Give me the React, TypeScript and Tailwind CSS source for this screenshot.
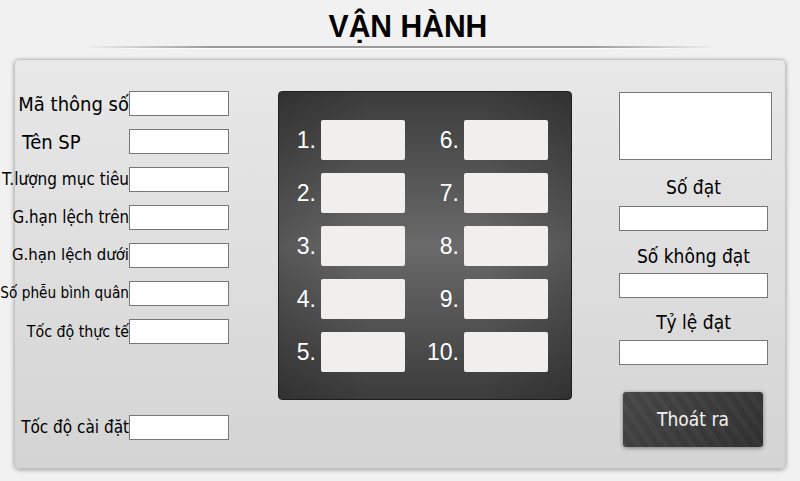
const leftRows = [
  { label: 'Mã thông số', size: 'text-[20px]', align: 'justify-end' },
  { label: 'Tên SP', size: 'text-[20px]', align: 'justify-between pl-[7px]' },
  { label: 'T.lượng mục tiêu', size: 'text-[17px]', align: 'justify-end' },
  { label: 'G.hạn lệch trên', size: 'text-[16.8px]', align: 'justify-end' },
  { label: 'G.hạn lệch dưới', size: 'text-[16.6px]', align: 'justify-end' },
  { label: 'Số phễu bình quân', size: 'text-[15.2px]', align: 'justify-end' },
  { label: 'Tốc độ thực tế', size: 'text-[15.8px]', align: 'justify-end' },
]

function Field({ className = '' }: { className?: string }) {
  return <div className={`shrink-0 border border-[#777] bg-white ${className}`} />
}

function LeftRow({ label, size, align, className = '' }: { label: string; size: string; align: string; className?: string }) {
  return (
    <div className={`flex h-[25px] items-center ${align} ${className}`}>
      <span className={`whitespace-nowrap leading-none text-black ${size}`}>{label}</span>
      <Field className="h-[25px] w-[100px]" />
    </div>
  )
}

export default function App() {
  const slots = Array.from({ length: 10 }, (_, i) => i + 1)

  return (
    <div className="flex h-[481px] w-[800px] flex-col overflow-hidden bg-[#f1f1f1] font-['DejaVu_Sans_Condensed','DejaVu_Sans',sans-serif] [font-stretch:condensed]">
      {/* Title */}
      <header className="flex h-[59px] shrink-0 flex-col items-center">
        <h1 className="origin-center scale-x-[0.94] pt-[9px] pl-[16px] font-['Liberation_Sans_Narrow','Liberation_Sans',sans-serif] text-[32px] leading-[34px] font-bold text-black">
          VẬN HÀNH
        </h1>
        <div className="mt-[3px] h-[2px] w-[630px] bg-[linear-gradient(to_right,transparent,#9a9a9a_20%,#9a9a9a_80%,transparent)]" />
        <div className="h-[1px] w-[630px] bg-[linear-gradient(to_right,transparent,#fff_20%,#fff_80%,transparent)]" />
      </header>

      {/* Main panel */}
      <main className="ml-[14px] flex h-[410px] w-[772px] shrink-0 rounded-[5px] border border-[#c4c4c4] bg-[linear-gradient(to_bottom,#e8e8e8,#d4d4d4)] shadow-[0_1px_4px_rgba(0,0,0,0.35)]">
        {/* Left column */}
        <div className="flex w-[214px] shrink-0 flex-col gap-[13px] pt-[31px]">
          {leftRows.map((r) => (
            <LeftRow key={r.label} {...r} />
          ))}
          <LeftRow label="Tốc độ cài đặt" size="text-[17px]" align="justify-end" className="mt-[58px]" />
        </div>

        {/* Center */}
        <div className="mt-[31px] ml-[49px] h-[309px] w-[294px] shrink-0 rounded-[4px] border border-[#1e1e1e] bg-[linear-gradient(to_right,rgba(0,0,0,0.18),transparent_30%,transparent_70%,rgba(0,0,0,0.18)),linear-gradient(to_bottom,#3c3c3c,#6a6a6a_50%,#3c3c3c)] pt-[28px] pl-[4px]">
          <div className="grid grid-flow-col grid-cols-[122px_122px] grid-rows-5 gap-x-[21px] gap-y-[13px]">
            {slots.map((n) => (
              <div key={n} className="flex items-center">
                <span className="w-[33px] text-right font-['Liberation_Sans',sans-serif] text-[23px] leading-none text-white">
                  {n}.
                </span>
                <div className="ml-[5px] h-[40px] w-[84px] rounded-[2px] bg-[#f1eeee]" />
              </div>
            ))}
          </div>
        </div>

        {/* Right column */}
        <div className="ml-[47px] flex w-[153px] shrink-0 flex-col">
          <Field className="mt-[32px] h-[68px] w-[153px]" />
          <div className="h-[46px] w-[149px] pt-[15px] text-center text-[19px] leading-[24px] text-black">Số đạt</div>
          <Field className="h-[25px] w-[149px]" />
          <div className="h-[42px] w-[149px] pt-[13px] text-center text-[19px] leading-[24px] text-black">Số không đạt</div>
          <Field className="h-[25px] w-[149px]" />
          <div className="h-[42px] w-[149px] pt-[12px] text-center text-[19px] leading-[24px] text-black">Tỷ lệ đạt</div>
          <Field className="h-[25px] w-[149px]" />
          <button className="mt-[27px] ml-[4px] flex h-[55px] w-[140px] items-center justify-center rounded-[3px] bg-[repeating-linear-gradient(55deg,rgba(255,255,255,0.03)_0px,rgba(255,255,255,0.03)_5px,transparent_5px,transparent_11px),linear-gradient(135deg,#474747,#2f2f2f)] text-[19px] leading-none text-[#f2f2f2] shadow-[0_1px_4px_rgba(0,0,0,0.45)]">
            Thoát ra
          </button>
        </div>
      </main>
    </div>
  )
}
